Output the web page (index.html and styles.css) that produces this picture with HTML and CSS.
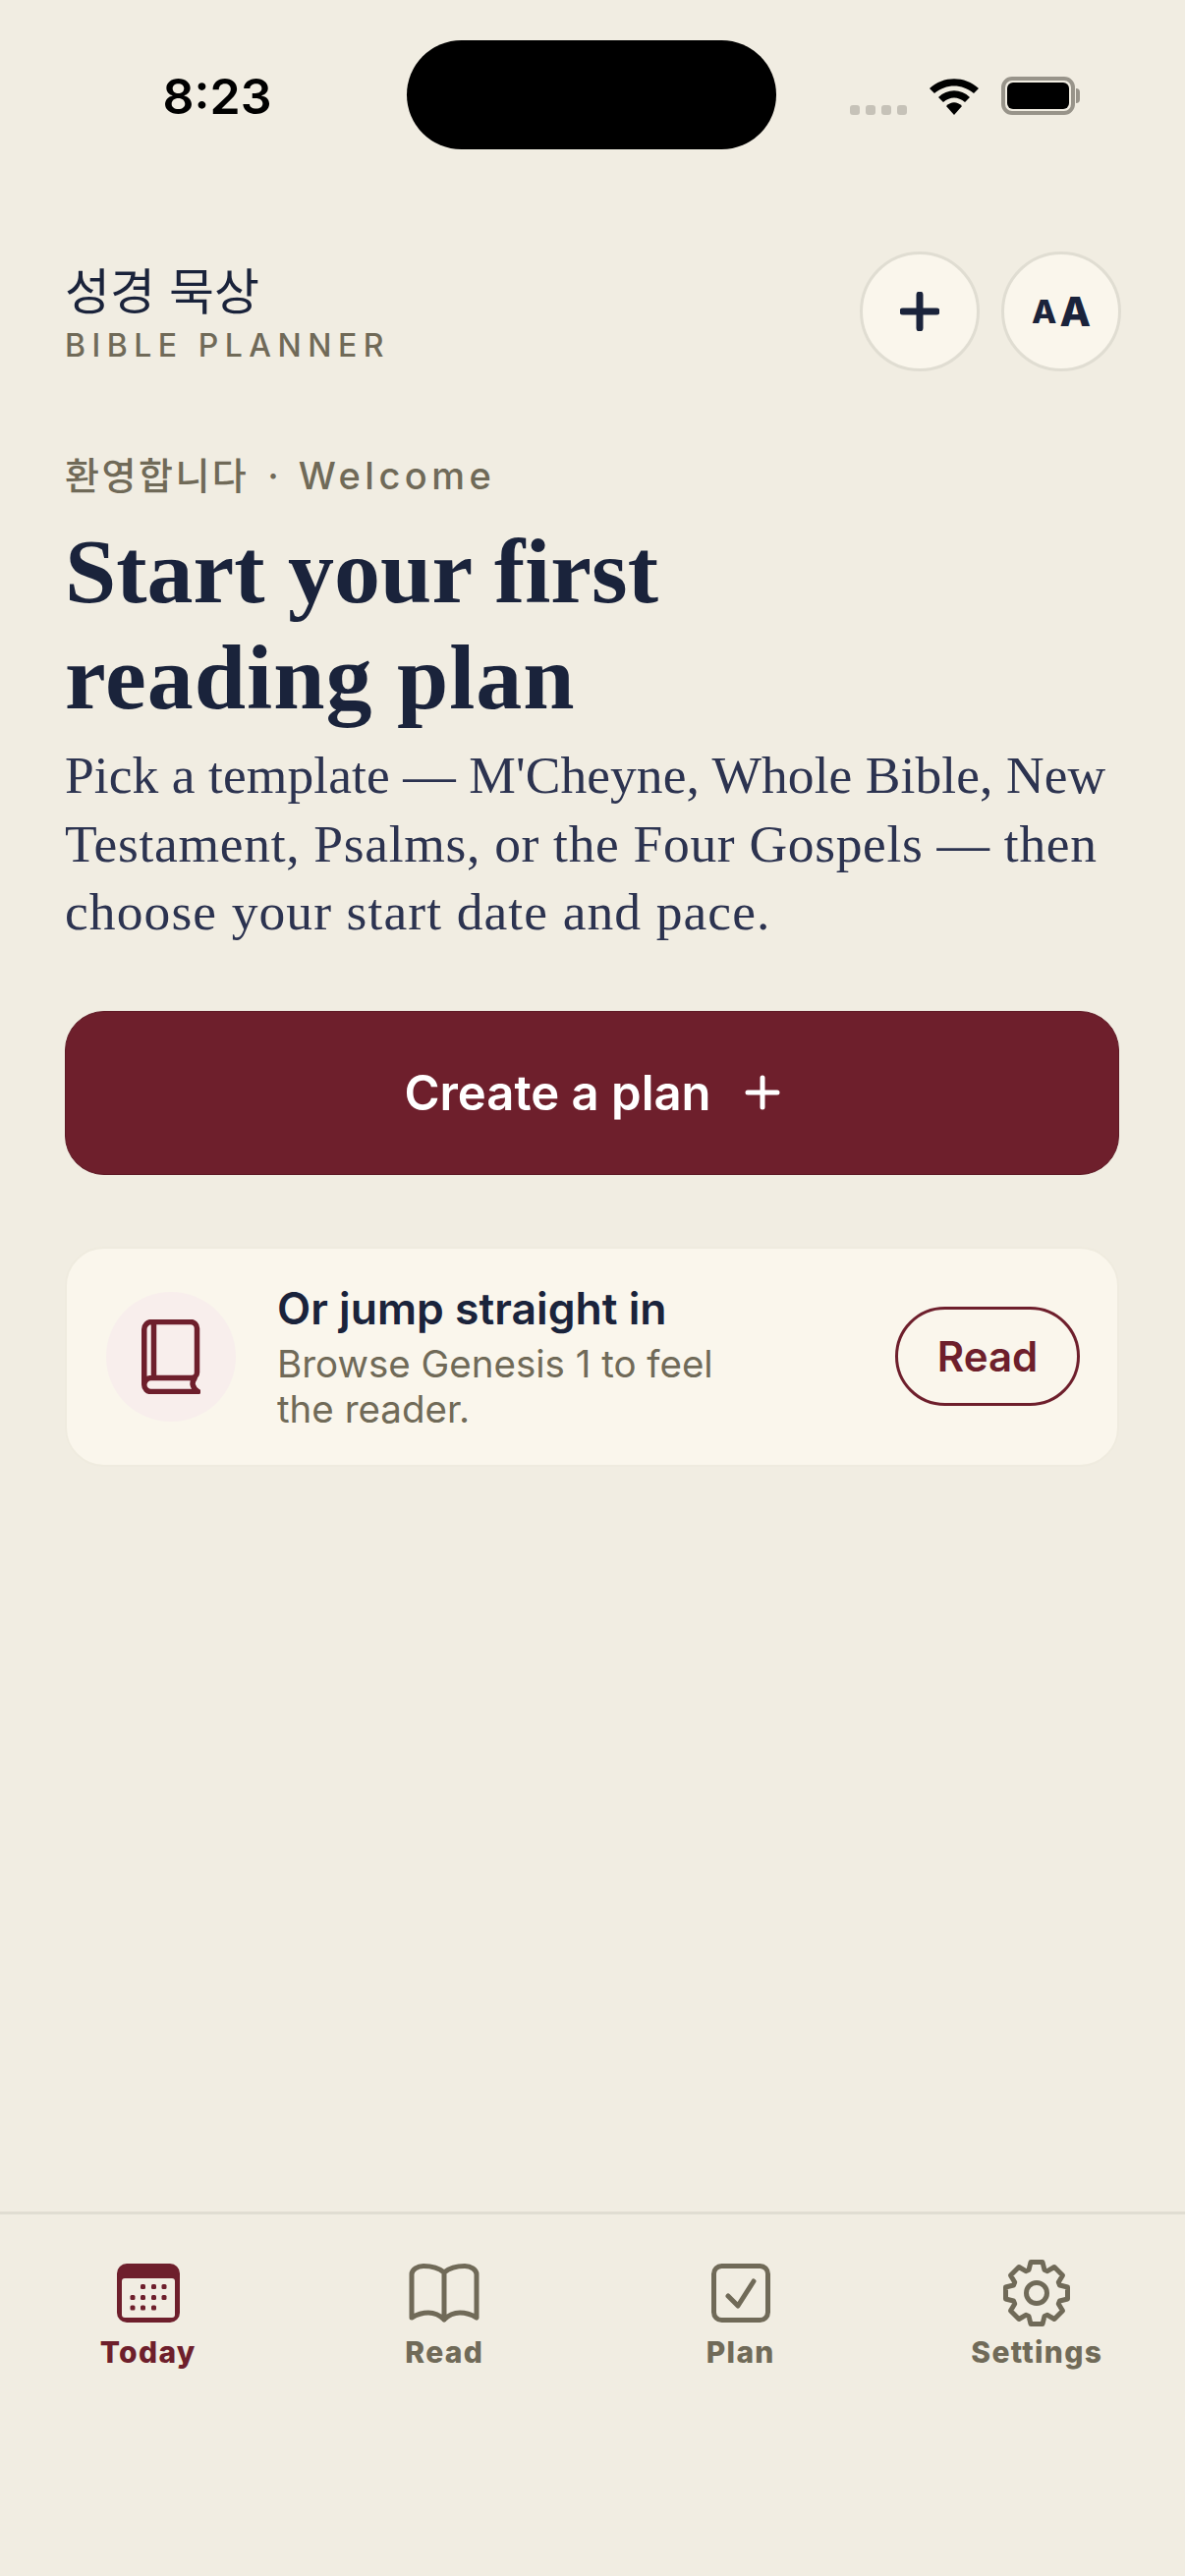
FILE: index.html
```html
<!DOCTYPE html>
<html lang="ko">
<head>
    <meta charset="UTF-8">
    <meta name="viewport" content="width=device-width, initial-scale=1.0">
    <title>Bible Planner</title>
    <link rel="stylesheet" href="styles.css">
</head>
<body>
    <div class="status">
        <div class="time">8:23</div>
        <div class="island"></div>
        <div class="status-icons">
            <div class="signal"><i></i><i></i><i></i><i></i></div>
            <svg class="wifi" width="52" height="38" viewBox="0 0 52 38">
                <path d="M1 11 C15 -2 37 -2 51 11 L46 16 C34 6 18 6 6 16 Z"/>
                <path d="M10 20 C19 11 33 11 42 20 L37 25 C30 19 22 19 15 25 Z"/>
                <path d="M18 29 C23 24 29 24 34 29 L26 38 Z"/>
            </svg>
            <div class="battery"><div class="battery-fill"></div></div>
        </div>
    </div>

    <div class="main">
        <div class="header">
            <div>
                <div class="app-name">성경 묵상</div>
                <div class="app-sub">BIBLE PLANNER</div>
            </div>
            <div class="header-buttons">
                <div class="round-btn">
                    <svg width="40" height="40" viewBox="0 0 40 40"><path class="navy-stroke" d="M20 3 V37 M3 20 H37"/></svg>
                </div>
                <div class="round-btn aa"><span class="aa-small">A</span><span class="aa-big">A</span></div>
            </div>
        </div>

        <div class="eyebrow"><span class="eyebrow-ko">환영합니다</span><span class="eyebrow-dot">·</span><span class="eyebrow-en">Welcome</span></div>
        <h1><span class="h1-first">Start your first</span><span class="h1-second">reading plan</span></h1>
        <p class="intro">
            <span class="intro-a">Pick a template — M'Cheyne, Whole Bible, New</span>
            <span class="intro-b">Testament, Psalms, or the Four Gospels — then</span>
            <span class="intro-c">choose your start date and pace.</span>
        </p>

        <div class="cta">
            <span>Create a plan</span>
            <svg width="36" height="36" viewBox="0 0 36 36"><path class="white-stroke" d="M18 3 V33 M3 18 H33"/></svg>
        </div>

        <div class="card">
            <div class="card-icon">
                <svg width="60" height="76" viewBox="0 0 60 76">
                    <path class="book" d="M2.750 66 V10 a7.500 7.500 0 0 1 7.500 -7.500 H50 a6.500 6.500 0 0 1 6.500 6.500 V54 a5.500 5.500 0 0 1 -5.500 5.500 H9.750 a7 7 0 0 0 0 14 H57.500 M12.500 3 V59 M54 60 c-3 4 -3 9 3.500 13.500"/>
                </svg>
            </div>
            <div class="card-text">
                <div class="card-title">Or jump straight in</div>
                <div class="card-sub">Browse Genesis 1 to feel<br>the reader.</div>
            </div>
            <div class="read-btn">Read</div>
        </div>
    </div>

    <div class="tabbar">
        <div class="tab active">
            <div class="tab-icon">
                <svg width="64" height="60" viewBox="0 0 64 60">
                    <rect width="64" height="60" rx="10" fill="#6e1f2c"/>
                    <rect x="5" y="15" width="54" height="40" rx="3" fill="#f1ede2"/>
                    <g fill="#6e1f2c">
                        <rect x="24" y="21" width="5" height="5" rx="1.500"/><rect x="35" y="21" width="5" height="5" rx="1.500"/><rect x="45.500" y="21" width="5" height="5" rx="1.500"/>
                        <rect x="13.500" y="32" width="5" height="5" rx="1.500"/><rect x="24" y="32" width="5" height="5" rx="1.500"/><rect x="35" y="32" width="5" height="5" rx="1.500"/><rect x="45.500" y="32" width="5" height="5" rx="1.500"/>
                        <rect x="13.500" y="42.500" width="5" height="5" rx="1.500"/><rect x="24" y="42.500" width="5" height="5" rx="1.500"/><rect x="35" y="42.500" width="5" height="5" rx="1.500"/>
                    </g>
                </svg>
            </div>
            <div class="tab-label">Today</div>
        </div>
        <div class="tab">
            <div class="tab-icon">
                <svg width="72" height="60" viewBox="0 0 72 60">
                    <path class="line" d="M36 9 C30 4 22 2.500 15 2.500 C9 2.500 3 6 3 11 V55 C8 52 14 50 20 50 C26 50 32 53 36 57 C40 53 46 50 52 50 C58 50 64 52 69 55 V11 C69 6 63 2.500 57 2.500 C50 2.500 42 4 36 9 V57"/>
                </svg>
            </div>
            <div class="tab-label">Read</div>
        </div>
        <div class="tab">
            <div class="tab-icon">
                <svg width="60" height="60" viewBox="0 0 60 60">
                    <rect class="line" x="2.500" y="2.500" width="55" height="55" rx="8"/>
                    <path class="line" d="M17 33 L27 43 L43 18"/>
                </svg>
            </div>
            <div class="tab-label">Plan</div>
        </div>
        <div class="tab">
            <div class="tab-icon">
                <svg width="72" height="72" viewBox="0 0 72 72">
                    <path class="line" d="M28 12.500 L30 4.500 H42 L44 12.500 L46.960 13.720 L54.030 9.490 L62.510 17.970 L58.280 25.040 L59.500 28 L67.500 30 V42 L59.500 44 L58.280 46.960 L62.510 54.030 L54.030 62.510 L46.960 58.280 L44 59.500 L42 67.500 H30 L28 59.500 L25.040 58.280 L17.970 62.510 L9.490 54.030 L13.720 46.960 L12.500 44 L4.500 42 V30 L12.500 28 L13.720 25.040 L9.490 17.970 L17.970 9.490 L25.040 13.720 Z"/>
                    <circle class="line" cx="36" cy="36" r="10.500"/>
                </svg>
            </div>
            <div class="tab-label">Settings</div>
        </div>
    </div>
</body>
</html>
```

FILE: styles.css
```css
* {box-sizing: border-box;}

body {margin: 0; height: 2622px; background: #f1ede2; color: #1a233b; font-family: Inter, "Noto Sans CJK KR", sans-serif; display: flex; flex-direction: column;}

/* status bar */
.status {display: flex; padding-top: 41px; height: 152px;}
.time {width: 414px; padding: 20px 0 0 28px; text-align: center; font-size: 50px; font-weight: 600; line-height: 74px; color: #000;}
.island {width: 376px; height: 111px; background: #000; border-radius: 56px;}
.status-icons {flex: 1; display: flex; align-items: flex-end; padding: 0 0 35px 75px;}
.signal {display: flex; gap: 6px; margin-right: 22px;}
.signal i {width: 10px; height: 10px; border-radius: 3px; background: #c6c2b8;}
.wifi {fill: #000; display: block; margin-right: 22px;}
.battery {width: 75px; height: 39px; border: 4px solid #98948a; border-radius: 11px; padding: 2px; position: relative;}
.battery-fill {height: 100%; background: #000; border-radius: 6px;}
.battery:after {content: ""; position: absolute; left: 72px; top: 8px; width: 4px; height: 15px; background: #98948a; border-radius: 0 6px 6px 0;}

.main {flex: 1; padding: 104px 65px 0 66px;}

.header {display: flex; justify-content: space-between; height: 122px;}
.app-name {font-size: 50px; font-weight: 400; line-height: 60px; margin-top: 7px; font-family: "Noto Sans CJK KR", sans-serif;}
.app-sub {font-size: 32px; font-weight: 500; letter-spacing: 6.500px; color: #706a58; line-height: 40px; margin-top: 9px;}
.header-buttons {display: flex; gap: 22px;}
.round-btn {width: 122px; height: 122px; border-radius: 50%; background: #faf6ec; border: 3px solid #e0ddd2; display: flex; align-items: center; justify-content: center;}
.navy-stroke {stroke: #1a233b; stroke-width: 7; stroke-linecap: round; fill: none;}
.aa {font-weight: 800; gap: 3px; line-height: 1;}
.aa-small {font-size: 33px;}
.aa-big {font-size: 41px;}

.eyebrow {margin-top: 81px; font-size: 38px; font-weight: 500; color: #706a58; line-height: 50px;}
.eyebrow-ko {letter-spacing: 2.500px;}
.eyebrow-dot {margin: 0 20px 0 19px;}
.eyebrow-en {letter-spacing: 4.500px;}

h1 {margin: 18px 0 0; font-family: "Liberation Serif", serif; font-size: 94px; font-weight: 700; line-height: 108px;}
.h1-first, .h1-second {display: block; white-space: nowrap;}
.h1-second {letter-spacing: 1px;}

/* the three lines set to the same ends as the reference */
.intro {margin: 12px 0 0; font-family: "Liberation Serif", serif; font-size: 53.500px; white-space: nowrap; line-height: 69.500px; color: #2c3350;}
.intro span {display: block;}
.intro-a {letter-spacing: 0.070px;}
.intro-b {letter-spacing: 0.680px;}
.intro-c {letter-spacing: 1.100px;}

.cta {margin: 65px 2px 0 0; height: 167px; background: #6e1f2c; border-radius: 40px; border: 1px solid #5f1a26; color: #fff; font-size: 49px; font-weight: 600; display: flex; align-items: center; justify-content: center; gap: 34px;}
.white-stroke {stroke: #fff; stroke-width: 5; stroke-linecap: round; fill: none;}

.card {margin: 73px 2px 0 0; height: 224px; background: #faf6ec; border: 2px solid #efebdf; border-radius: 40px; padding: 0 38px 0 40px; display: flex; align-items: center;}
.card-icon {width: 132px; height: 132px; border-radius: 50%; background: #f8eeec; display: flex; align-items: center; justify-content: center; margin-right: 42px;}
.book {stroke: #6e1f2c; stroke-width: 5.500; fill: none; stroke-linecap: round; stroke-linejoin: round;}
.card-text {flex: 1;}
.card-title {font-size: 44.500px; font-weight: 600; line-height: 54px; margin-bottom: 6px;}
.card-sub {font-size: 38.500px; line-height: 46px; color: #706a58;}
.read-btn {width: 188px; height: 101px; border: 3px solid #6e1f2c; border-radius: 51px; color: #6e1f2c; font-size: 42px; font-weight: 600; display: flex; align-items: center; justify-content: center;}

.tabbar {height: 371px; border-top: 3px solid #e0ddd2; display: grid; grid-template-columns: repeat(4, 1fr); padding-top: 44px; align-items: start;}
.tab {display: flex; flex-direction: column; align-items: center; color: #706a58;}
.tab.active {color: #6e1f2c;}
.tab-icon {height: 72px; display: flex; align-items: center; justify-content: center;}
.tab-label {font-size: 30px; font-weight: 800; letter-spacing: 1.300px; line-height: 40px; margin-top: 4px;}
.line {stroke: #706a58; stroke-width: 5; fill: none; stroke-linecap: round; stroke-linejoin: round;}
```
